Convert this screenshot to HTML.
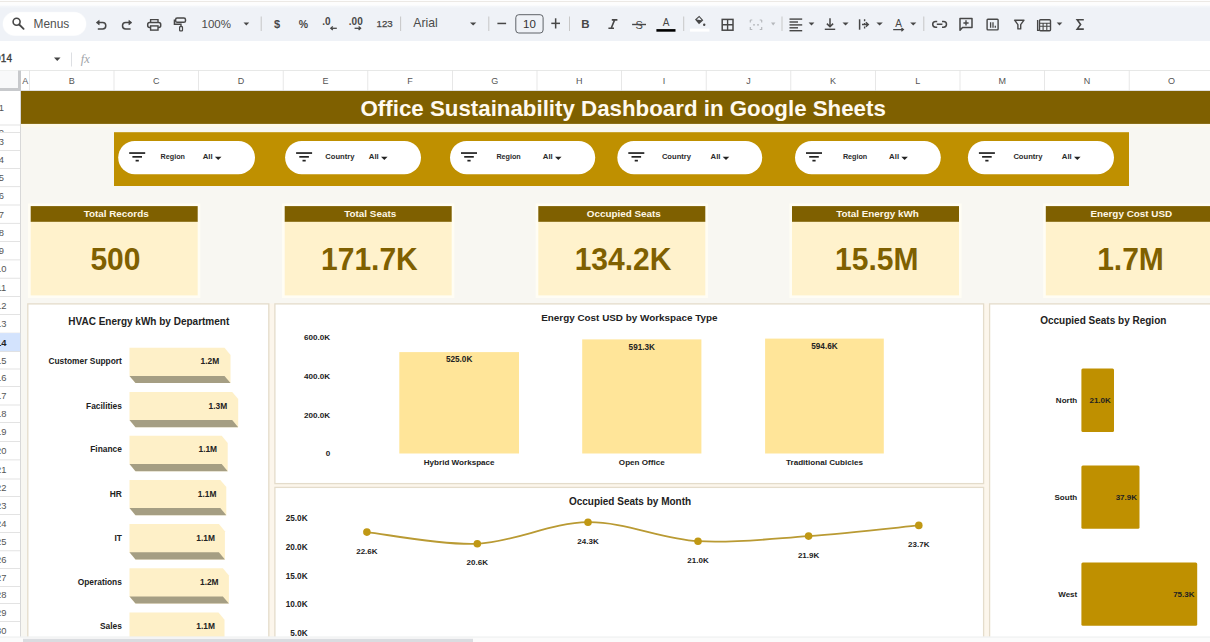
<!DOCTYPE html>
<html><head><meta charset="utf-8"><title>Office Sustainability Dashboard</title>
<style>html,body{margin:0;padding:0;width:1210px;height:642px;overflow:hidden;background:#fff}
svg{display:block;font-family:"Liberation Sans", sans-serif}</style></head>
<body><svg width="1210" height="642" viewBox="0 0 1210 642" font-family='"Liberation Sans", sans-serif'>
<rect x="0" y="0" width="1210" height="642" fill="#ffffff" />
<rect x="0" y="0" width="1210" height="8" fill="#fdfdfd" />
<rect x="0" y="1" width="1210" height="1" fill="#ece9e5" />
<defs><linearGradient id="tb" x1="0" y1="0" x2="0" y2="1"><stop offset="0" stop-color="#f6f8fb"/><stop offset="0.08" stop-color="#eff2f7"/><stop offset="1" stop-color="#eff2f7"/></linearGradient></defs>
<rect x="0" y="5.5" width="1210" height="35.5" fill="url(#tb)" />
<rect x="2.5" y="11.8" width="84" height="24.2" rx="12.1" fill="#f6f8fb"/><rect x="3" y="12.3" width="83" height="23.2" rx="11.6" fill="#ffffff"/>
<rect x="0" y="41" width="1210" height="29.5" fill="#ffffff" />
<rect x="0" y="70" width="1210" height="21" fill="#ffffff" />
<rect x="0" y="70" width="1210" height="0.8" fill="#e1e3e1" />
<rect x="0" y="70.5" width="21" height="20.5" fill="#f8f9fa" />
<rect x="18" y="70.5" width="3" height="20.5" fill="#c7c9cc" />
<rect x="0" y="88" width="21" height="3" fill="#c7c9cc" />
<rect x="21" y="91" width="1189" height="551" fill="#f8f7f2" />
<rect x="0" y="91" width="20.5" height="551" fill="#ffffff" />
<rect x="20" y="91" width="0.9" height="551" fill="#d4d4d4" />
<rect x="0" y="124.6" width="20.2" height="0.8" fill="#dcdcdc" />
<text x="1.3" y="111.4" font-size="9.4" font-weight="normal" fill="#555555" text-anchor="middle" >1</text>
<rect x="0" y="132.0" width="20.2" height="0.8" fill="#dcdcdc" />
<clipPath id="r2"><rect x="0" y="125.5" width="20" height="6.4"/></clipPath>
<g clip-path="url(#r2)">
<text x="1.3" y="136.0" font-size="9.4" font-weight="normal" fill="#555555" text-anchor="middle" >2</text>
</g>
<rect x="0" y="150.1" width="20.2" height="0.8" fill="#dcdcdc" />
<text x="1.3" y="144.8" font-size="9.4" font-weight="normal" fill="#555555" text-anchor="middle" >3</text>
<rect x="0" y="168.0" width="20.2" height="0.8" fill="#dcdcdc" />
<text x="1.3" y="162.8" font-size="9.4" font-weight="normal" fill="#555555" text-anchor="middle" >4</text>
<rect x="0" y="186.3" width="20.2" height="0.8" fill="#dcdcdc" />
<text x="1.3" y="181.0" font-size="9.4" font-weight="normal" fill="#555555" text-anchor="middle" >5</text>
<rect x="0" y="204.6" width="20.2" height="0.8" fill="#dcdcdc" />
<text x="1.3" y="199.2" font-size="9.4" font-weight="normal" fill="#555555" text-anchor="middle" >6</text>
<rect x="0" y="222.9" width="20.2" height="0.8" fill="#dcdcdc" />
<text x="1.3" y="217.6" font-size="9.4" font-weight="normal" fill="#555555" text-anchor="middle" >7</text>
<rect x="0" y="241.2" width="20.2" height="0.8" fill="#dcdcdc" />
<text x="1.3" y="235.8" font-size="9.4" font-weight="normal" fill="#555555" text-anchor="middle" >8</text>
<rect x="0" y="259.5" width="20.2" height="0.8" fill="#dcdcdc" />
<text x="1.3" y="254.2" font-size="9.4" font-weight="normal" fill="#555555" text-anchor="middle" >9</text>
<rect x="0" y="277.8" width="20.2" height="0.8" fill="#dcdcdc" />
<text x="1.3" y="272.4" font-size="9.4" font-weight="normal" fill="#555555" text-anchor="middle" >10</text>
<rect x="0" y="296.2" width="20.2" height="0.8" fill="#dcdcdc" />
<text x="1.3" y="290.8" font-size="9.4" font-weight="normal" fill="#555555" text-anchor="middle" >11</text>
<rect x="0" y="314.2" width="20.2" height="0.8" fill="#dcdcdc" />
<text x="1.3" y="309.0" font-size="9.4" font-weight="normal" fill="#555555" text-anchor="middle" >12</text>
<rect x="0" y="332.7" width="20.2" height="0.8" fill="#dcdcdc" />
<text x="1.3" y="327.2" font-size="9.4" font-weight="normal" fill="#555555" text-anchor="middle" >13</text>
<rect x="0" y="333.1" width="20.2" height="18.3" fill="#d3e3fd" />
<rect x="0" y="351.0" width="20.2" height="0.8" fill="#dcdcdc" />
<text x="1.3" y="345.6" font-size="9.4" font-weight="bold" fill="#1f1f1f" text-anchor="middle" >14</text>
<rect x="0" y="368.6" width="20.2" height="0.8" fill="#dcdcdc" />
<text x="1.3" y="363.6" font-size="9.4" font-weight="normal" fill="#555555" text-anchor="middle" >15</text>
<rect x="0" y="386.0" width="20.2" height="0.8" fill="#dcdcdc" />
<text x="1.3" y="381.1" font-size="9.4" font-weight="normal" fill="#555555" text-anchor="middle" >16</text>
<rect x="0" y="404.6" width="20.2" height="0.8" fill="#dcdcdc" />
<text x="1.3" y="399.1" font-size="9.4" font-weight="normal" fill="#555555" text-anchor="middle" >17</text>
<rect x="0" y="422.0" width="20.2" height="0.8" fill="#dcdcdc" />
<text x="1.3" y="417.1" font-size="9.4" font-weight="normal" fill="#555555" text-anchor="middle" >18</text>
<rect x="0" y="441.2" width="20.2" height="0.8" fill="#dcdcdc" />
<text x="1.3" y="435.4" font-size="9.4" font-weight="normal" fill="#555555" text-anchor="middle" >19</text>
<rect x="0" y="459.5" width="20.2" height="0.8" fill="#dcdcdc" />
<text x="1.3" y="454.1" font-size="9.4" font-weight="normal" fill="#555555" text-anchor="middle" >20</text>
<rect x="0" y="478.6" width="20.2" height="0.8" fill="#dcdcdc" />
<text x="1.3" y="472.8" font-size="9.4" font-weight="normal" fill="#555555" text-anchor="middle" >21</text>
<rect x="0" y="496.0" width="20.2" height="0.8" fill="#dcdcdc" />
<text x="1.3" y="491.1" font-size="9.4" font-weight="normal" fill="#555555" text-anchor="middle" >22</text>
<rect x="0" y="514.1" width="20.2" height="0.8" fill="#dcdcdc" />
<text x="1.3" y="508.8" font-size="9.4" font-weight="normal" fill="#555555" text-anchor="middle" >23</text>
<rect x="0" y="532.0" width="20.2" height="0.8" fill="#dcdcdc" />
<text x="1.3" y="526.9" font-size="9.4" font-weight="normal" fill="#555555" text-anchor="middle" >24</text>
<rect x="0" y="550.4" width="20.2" height="0.8" fill="#dcdcdc" />
<text x="1.3" y="545.0" font-size="9.4" font-weight="normal" fill="#555555" text-anchor="middle" >25</text>
<rect x="0" y="568.2" width="20.2" height="0.8" fill="#dcdcdc" />
<text x="1.3" y="563.1" font-size="9.4" font-weight="normal" fill="#555555" text-anchor="middle" >26</text>
<rect x="0" y="586.0" width="20.2" height="0.8" fill="#dcdcdc" />
<text x="1.3" y="580.9" font-size="9.4" font-weight="normal" fill="#555555" text-anchor="middle" >27</text>
<rect x="0" y="603.2" width="20.2" height="0.8" fill="#dcdcdc" />
<text x="1.3" y="598.4" font-size="9.4" font-weight="normal" fill="#555555" text-anchor="middle" >28</text>
<rect x="0" y="621.0" width="20.2" height="0.8" fill="#dcdcdc" />
<text x="1.3" y="615.9" font-size="9.4" font-weight="normal" fill="#555555" text-anchor="middle" >29</text>
<rect x="0" y="638.4" width="20.2" height="0.8" fill="#dcdcdc" />
<text x="1.3" y="633.5" font-size="9.4" font-weight="normal" fill="#555555" text-anchor="middle" >30</text>
<rect x="0" y="655.6" width="20.2" height="0.8" fill="#dcdcdc" />
<text x="1.3" y="650.8" font-size="9.4" font-weight="normal" fill="#555555" text-anchor="middle" >31</text>
<rect x="29.0" y="70.5" width="0.8" height="20.5" fill="#e1e1e1" />
<text x="25.2" y="83.8" font-size="9" font-weight="normal" fill="#555555" text-anchor="middle" >A</text>
<rect x="113.6" y="70.5" width="0.8" height="20.5" fill="#e1e1e1" />
<text x="71.7" y="83.8" font-size="9" font-weight="normal" fill="#555555" text-anchor="middle" >B</text>
<rect x="198.2" y="70.5" width="0.8" height="20.5" fill="#e1e1e1" />
<text x="156.3" y="83.8" font-size="9" font-weight="normal" fill="#555555" text-anchor="middle" >C</text>
<rect x="282.8" y="70.5" width="0.8" height="20.5" fill="#e1e1e1" />
<text x="240.9" y="83.8" font-size="9" font-weight="normal" fill="#555555" text-anchor="middle" >D</text>
<rect x="367.4" y="70.5" width="0.8" height="20.5" fill="#e1e1e1" />
<text x="325.5" y="83.8" font-size="9" font-weight="normal" fill="#555555" text-anchor="middle" >E</text>
<rect x="452.0" y="70.5" width="0.8" height="20.5" fill="#e1e1e1" />
<text x="410.1" y="83.8" font-size="9" font-weight="normal" fill="#555555" text-anchor="middle" >F</text>
<rect x="536.6" y="70.5" width="0.8" height="20.5" fill="#e1e1e1" />
<text x="494.7" y="83.8" font-size="9" font-weight="normal" fill="#555555" text-anchor="middle" >G</text>
<rect x="621.2" y="70.5" width="0.8" height="20.5" fill="#e1e1e1" />
<text x="579.3" y="83.8" font-size="9" font-weight="normal" fill="#555555" text-anchor="middle" >H</text>
<rect x="705.8" y="70.5" width="0.8" height="20.5" fill="#e1e1e1" />
<text x="663.9" y="83.8" font-size="9" font-weight="normal" fill="#555555" text-anchor="middle" >I</text>
<rect x="790.4" y="70.5" width="0.8" height="20.5" fill="#e1e1e1" />
<text x="748.5" y="83.8" font-size="9" font-weight="normal" fill="#555555" text-anchor="middle" >J</text>
<rect x="875" y="70.5" width="0.8" height="20.5" fill="#e1e1e1" />
<text x="833.1" y="83.8" font-size="9" font-weight="normal" fill="#555555" text-anchor="middle" >K</text>
<rect x="959.6" y="70.5" width="0.8" height="20.5" fill="#e1e1e1" />
<text x="917.7" y="83.8" font-size="9" font-weight="normal" fill="#555555" text-anchor="middle" >L</text>
<rect x="1044.2" y="70.5" width="0.8" height="20.5" fill="#e1e1e1" />
<text x="1002.3" y="83.8" font-size="9" font-weight="normal" fill="#555555" text-anchor="middle" >M</text>
<rect x="1128.8" y="70.5" width="0.8" height="20.5" fill="#e1e1e1" />
<text x="1086.9" y="83.8" font-size="9" font-weight="normal" fill="#555555" text-anchor="middle" >N</text>
<rect x="1213.4" y="70.5" width="0.8" height="20.5" fill="#e1e1e1" />
<text x="1171.5" y="83.8" font-size="9" font-weight="normal" fill="#555555" text-anchor="middle" >O</text>
<rect x="21" y="90.2" width="1189" height="0.8" fill="#d9d9d9" />
<text x="-6.4" y="61.8" font-size="10" font-weight="normal" fill="#3c3c3c" text-anchor="start" stroke="#3c3c3c" stroke-width="0.35">D14</text>
<path d="M54 57.5 L60.5 57.5 L57.25 61 Z" fill="#444"/>
<rect x="71" y="52.5" width="0.9" height="14" fill="#dadce0" />
<text x="80.8" y="63.0" font-size="12.5" font-weight="normal" fill="#a0a4a8" text-anchor="start" font-style="italic" font-family="Liberation Serif, serif">fx</text>
<circle cx="16.6" cy="21.8" r="3.5" stroke="#474747" fill="none" stroke-width="1.6"/><path d="M19.2 24.5 L23.6 28.9" stroke="#474747" fill="none" stroke-width="1.8" stroke-linecap="round"/>
<text x="33.5" y="27.7" font-size="11.9" font-weight="normal" fill="#505050" text-anchor="start" >Menus</text>
<path d="M97.8 29 H102.6 A3.2 3.2 0 0 0 102.6 22.6 H98" stroke="#474747" fill="none" stroke-width="1.5"/><path d="M96.2 22.6 L99.2 20.3 V24.9 Z" fill="#474747" stroke="#474747" stroke-width="0.6" stroke-linejoin="round"/>
<path d="M130.6 29 H125.7 A3.2 3.2 0 0 1 125.7 22.6 H130.2" stroke="#474747" fill="none" stroke-width="1.5"/><path d="M131.9 22.6 L128.9 20.3 V24.9 Z" fill="#474747" stroke="#474747" stroke-width="0.6" stroke-linejoin="round"/>
<path d="M150.6 22.4 V19.6 H158 V22.4" stroke="#474747" fill="none" stroke-width="1.4"/><rect x="147.7" y="22.4" width="13" height="5.2" rx="2" stroke="#474747" fill="none" stroke-width="1.5"/><rect x="150.6" y="25.9" width="7.4" height="4.2" fill="#eff2f7" stroke="#474747" fill="none" stroke-width="1.4"/>
<rect x="175.6" y="18.1" width="9.9" height="4.2" rx="1.6" stroke="#474747" fill="none" stroke-width="1.5"/><path d="M175.6 20.2 H174.4 V24.3 H181 V26.6" stroke="#474747" fill="none" stroke-width="1.4"/><rect x="179.6" y="26.6" width="2.9" height="4.2" rx="0.6" stroke="#474747" fill="none" stroke-width="1.2"/>
<text x="201.5" y="28.2" font-size="11.5" font-weight="normal" fill="#4a4a4a" text-anchor="start" >100%</text>
<path d="M243.5 22.6 L249.2 22.6 L246.35 25.4 Z" fill="#474747"/>
<rect x="260.7" y="16.5" width="1" height="14.5" fill="#c7c7c7" />
<text x="277.1" y="27.9" font-size="11" font-weight="bold" fill="#474747" text-anchor="middle" >$</text>
<text x="303.5" y="27.6" font-size="10.5" font-weight="bold" fill="#474747" text-anchor="middle" >%</text>
<text x="322.3" y="25.4" font-size="10" font-weight="bold" fill="#474747" text-anchor="start" >.0</text>
<path d="M336.8 28.3 H331" stroke="#474747" fill="none" stroke-width="1.3"/><path d="M332.8 26.5 L330.8 28.3 L332.8 30.1" stroke="#474747" fill="none" stroke-width="1.3"/>
<text x="348.8" y="25.4" font-size="10" font-weight="bold" fill="#474747" text-anchor="start" >.00</text>
<path d="M354.6 28.3 H360.4" stroke="#474747" fill="none" stroke-width="1.3"/><path d="M358.6 26.5 L360.6 28.3 L358.6 30.1" stroke="#474747" fill="none" stroke-width="1.3"/>
<text x="376.6" y="26.9" font-size="9.7" font-weight="normal" fill="#444444" text-anchor="start" stroke="#444" stroke-width="0.25">123</text>
<rect x="400.1" y="16.5" width="1" height="14.5" fill="#c7c7c7" />
<text x="413.3" y="27.0" font-size="12.2" font-weight="normal" fill="#4a4a4a" text-anchor="start" >Arial</text>
<path d="M470 22.6 L476.3 22.6 L473.15 25.4 Z" fill="#474747"/>
<rect x="488.3" y="16.5" width="1" height="14.5" fill="#c7c7c7" />
<rect x="497.4" y="22.7" width="8.7" height="1.5" fill="#474747" />
<rect x="515.8" y="14.7" width="27.3" height="18.3" rx="3" fill="none" stroke="#5f6368" stroke-width="1"/>
<text x="529.4" y="28" font-size="11.5" font-weight="normal" fill="#333" text-anchor="middle" >10</text>
<rect x="551.3" y="22.6" width="8.7" height="1.5" fill="#474747" />
<rect x="554.9" y="18.3" width="1.5" height="10.2" fill="#474747" />
<rect x="569.0" y="16.5" width="1" height="14.5" fill="#c7c7c7" />
<text x="585.4" y="28.1" font-size="11.5" font-weight="bold" fill="#474747" text-anchor="middle" >B</text>
<path d="M611.8 19.9 H617.4 M608.4 28.2 H614 M614.6 19.9 L611.2 28.2" stroke="#474747" fill="none" stroke-width="1.6"/>
<text x="639.1" y="29.3" font-size="11" font-weight="normal" fill="#474747" text-anchor="middle" >S</text>
<rect x="632.1" y="23.8" width="13.9" height="1.4" fill="#474747" />
<text x="666" y="26.2" font-size="10" font-weight="normal" fill="#474747" text-anchor="middle" >A</text>
<rect x="656.4" y="29.1" width="19.1" height="2.6" fill="#000000" />
<rect x="683.2" y="16.5" width="1" height="14.5" fill="#c7c7c7" />
<path d="M695 19.5 L699.2 15.8 L703.3 20.3 L699 24.3 Z" fill="#474747"/><path d="M696.6 19.5 L699.2 17.3 L701.7 20.2 Z" fill="#eef2f8"/><circle cx="704.2" cy="24.8" r="1.2" fill="#474747"/>
<rect x="690" y="28.6" width="19.4" height="3" fill="#ffffff" />
<rect x="722.2" y="19.4" width="10.8" height="10.8" stroke="#474747" fill="none" stroke-width="1.5"/><path d="M727.6 19.4 V30.2 M722.2 24.8 H733" stroke="#474747" fill="none" stroke-width="1.4"/>
<path d="M750.3 20 H752.3 M750.3 20 V22.5 M750.3 27 V29.5 H752.3 M761.7 20 H759.7 M761.7 20 V22.5 M761.7 27 V29.5 H759.7" stroke="#b5b8bc" fill="none" stroke-width="1.2"/><path d="M753 24.8 H755 M757 24.8 H759" stroke="#b5b8bc" stroke-width="1.2"/>
<path d="M771 22.6 L775.4 22.6 L773.2 25.4 Z" fill="#b5b8bc"/>
<rect x="781.5" y="16.5" width="1" height="14.5" fill="#c7c7c7" />
<rect x="789.5" y="18.4" width="12.7" height="1.4" fill="#474747" />
<rect x="789.5" y="21.3" width="8.5" height="1.4" fill="#474747" />
<rect x="789.5" y="24.2" width="12.7" height="1.4" fill="#474747" />
<rect x="789.5" y="27.1" width="8.5" height="1.4" fill="#474747" />
<rect x="789.5" y="30.0" width="12.7" height="1.4" fill="#474747" />
<path d="M808.6 22.6 L814.4 22.6 L811.5 25.4 Z" fill="#474747"/>
<path d="M830 18.3 V26.5 M826.9 23.6 L830 26.7 L833.1 23.6" stroke="#474747" fill="none" stroke-width="1.5"/>
<rect x="824.8" y="28.6" width="10.4" height="1.4" fill="#474747" />
<path d="M842.5 22.6 L848.6 22.6 L845.55 25.4 Z" fill="#474747"/>
<path d="M859.6 19.3 V29.7" stroke="#474747" fill="none" stroke-width="1.5"/><path d="M864.6 19.3 V29.7" stroke="#474747" fill="none" stroke-width="1.4" stroke-dasharray="2 1.6"/><path d="M862 24.5 H868 M865.9 22.3 L868.3 24.5 L865.9 26.7" stroke="#474747" fill="none" stroke-width="1.4"/>
<path d="M876.4 22.6 L882.8 22.6 L879.6 25.4 Z" fill="#474747"/>
<text x="898.6" y="27.2" font-size="10" font-weight="normal" fill="#474747" text-anchor="middle" >A</text>
<path d="M893.2 29.6 H903 M901.4 28 L903.4 29.6 L901.4 31.2" stroke="#474747" fill="none" stroke-width="1.2"/>
<path d="M910.2 22.6 L916.3 22.6 L913.25 25.4 Z" fill="#474747"/>
<rect x="923.3" y="16.5" width="1" height="14.5" fill="#c7c7c7" />
<path d="M937.2 21.4 H935.6 A2.9 2.9 0 0 0 935.6 27.2 H937.2 M942 21.4 H943.6 A2.9 2.9 0 0 1 943.6 27.2 H942 M936.8 24.3 H942.4" stroke="#474747" fill="none" stroke-width="1.5"/>
<path d="M960 30.2 V18.5 H972 V27.5 H962.5 Z" stroke="#474747" fill="none" stroke-width="1.5" stroke-linejoin="round"/><path d="M966 20.3 V25.6 M963.4 23 H968.6" stroke="#474747" fill="none" stroke-width="1.4"/>
<rect x="987.1" y="19.3" width="11" height="10.6" rx="0.8" stroke="#474747" fill="none" stroke-width="1.4"/><path d="M990.6 22.2 V27.8 M993 22.2 V27.8 M995.3 25.8 V27.8" stroke="#474747" fill="none" stroke-width="1.3"/>
<path d="M1014.6 20.2 H1024 L1020.7 24.6 V28.9 H1017.9 V24.6 Z" stroke="#474747" fill="none" stroke-width="1.4" stroke-linejoin="round"/>
<path d="M1037.6 20 V30.4 H1039" stroke="#474747" fill="none" stroke-width="1.3"/><rect x="1039.5" y="19.8" width="11" height="11" rx="1" stroke="#474747" fill="none" stroke-width="1.4"/><path d="M1039.5 23.3 H1050.5 M1039.5 26.2 H1050.5 M1043.1 23.3 V30.8 M1046.8 23.3 V30.8" stroke="#474747" fill="none" stroke-width="1.1"/>
<path d="M1056.7 22.6 L1062.3 22.6 L1059.5 25.4 Z" fill="#474747"/>
<path d="M1083.8 19.8 H1077.2 L1080.6 24.5 L1077.2 29.1 H1083.8" stroke="#474747" fill="none" stroke-width="1.6"/>
<rect x="21" y="124" width="1189" height="3.2" fill="#fdf9ea" />
<rect x="21" y="91" width="1189" height="32.9" fill="#7f6000" />
<text x="623.2" y="115.6" font-size="22.3" font-weight="bold" fill="#fffaf0" text-anchor="middle" >Office Sustainability Dashboard in Google Sheets</text>
<rect x="114" y="132.2" width="1015" height="53.8" fill="#bf9000" />
<rect x="118.2" y="141" width="136.8" height="33.2" rx="16.6" fill="#ffffff"/>
<rect x="129.2" y="152.2" width="16" height="1.7" fill="#222" />
<rect x="132.4" y="156" width="9.6" height="1.7" fill="#222" />
<rect x="135.6" y="159.8" width="3.2" height="1.7" fill="#222" />
<text x="160.6" y="158.5" font-size="7.2" font-weight="bold" fill="#2b2b2b" text-anchor="start" >Region</text>
<text x="202.7" y="158.6" font-size="7.8" font-weight="bold" fill="#2b2b2b" text-anchor="start" >All</text>
<path d="M214.9 156.7 L221.5 156.7 L218.2 160.1 Z" fill="#222"/>
<rect x="285.1" y="141" width="135.9" height="33.2" rx="16.6" fill="#ffffff"/>
<rect x="296.1" y="152.2" width="16" height="1.7" fill="#222" />
<rect x="299.3" y="156" width="9.6" height="1.7" fill="#222" />
<rect x="302.5" y="159.8" width="3.2" height="1.7" fill="#222" />
<text x="325.3" y="158.5" font-size="7.6" font-weight="bold" fill="#2b2b2b" text-anchor="start" >Country</text>
<text x="368.8" y="158.6" font-size="7.8" font-weight="bold" fill="#2b2b2b" text-anchor="start" >All</text>
<path d="M381 156.7 L387.6 156.7 L384.3 160.1 Z" fill="#222"/>
<rect x="450" y="141" width="145.2" height="33.2" rx="16.6" fill="#ffffff"/>
<rect x="461" y="152.2" width="16" height="1.7" fill="#222" />
<rect x="464.2" y="156" width="9.6" height="1.7" fill="#222" />
<rect x="467.4" y="159.8" width="3.2" height="1.7" fill="#222" />
<text x="496.4" y="158.5" font-size="7.2" font-weight="bold" fill="#2b2b2b" text-anchor="start" >Region</text>
<text x="542.8" y="158.6" font-size="7.8" font-weight="bold" fill="#2b2b2b" text-anchor="start" >All</text>
<path d="M555 156.7 L561.6 156.7 L558.3 160.1 Z" fill="#222"/>
<rect x="617.3" y="141" width="144.9" height="33.2" rx="16.6" fill="#ffffff"/>
<rect x="628.3" y="152.2" width="16" height="1.7" fill="#222" />
<rect x="631.5" y="156" width="9.6" height="1.7" fill="#222" />
<rect x="634.7" y="159.8" width="3.2" height="1.7" fill="#222" />
<text x="661.9" y="158.5" font-size="7.6" font-weight="bold" fill="#2b2b2b" text-anchor="start" >Country</text>
<text x="710.5" y="158.6" font-size="7.8" font-weight="bold" fill="#2b2b2b" text-anchor="start" >All</text>
<path d="M722.7 156.7 L729.3 156.7 L726.0 160.1 Z" fill="#222"/>
<rect x="795" y="141" width="145.8" height="33.2" rx="16.6" fill="#ffffff"/>
<rect x="806" y="152.2" width="16" height="1.7" fill="#222" />
<rect x="809.2" y="156" width="9.6" height="1.7" fill="#222" />
<rect x="812.4" y="159.8" width="3.2" height="1.7" fill="#222" />
<text x="842.9" y="158.5" font-size="7.2" font-weight="bold" fill="#2b2b2b" text-anchor="start" >Region</text>
<text x="889.1" y="158.6" font-size="7.8" font-weight="bold" fill="#2b2b2b" text-anchor="start" >All</text>
<path d="M901.3 156.7 L907.9 156.7 L904.6 160.1 Z" fill="#222"/>
<rect x="967.9" y="141" width="146.1" height="33.2" rx="16.6" fill="#ffffff"/>
<rect x="978.9" y="152.2" width="16" height="1.7" fill="#222" />
<rect x="982.1" y="156" width="9.6" height="1.7" fill="#222" />
<rect x="985.3" y="159.8" width="3.2" height="1.7" fill="#222" />
<text x="1013.4" y="158.5" font-size="7.6" font-weight="bold" fill="#2b2b2b" text-anchor="start" >Country</text>
<text x="1061.8" y="158.6" font-size="7.8" font-weight="bold" fill="#2b2b2b" text-anchor="start" >All</text>
<path d="M1074 156.7 L1080.6 156.7 L1077.3 160.1 Z" fill="#222"/>
<rect x="28.1" y="203.5" width="172.2" height="94.6" fill="#fffdf4" />
<rect x="30.7" y="206.1" width="167" height="15.8" fill="#7f6000" />
<rect x="30.7" y="221.9" width="167" height="73.5" fill="#fff2cc" />
<text x="116.2" y="216.9" font-size="9.9" font-weight="bold" fill="#fff8e6" text-anchor="middle" >Total Records</text>
<g transform="translate(115.4 270.3) scale(1 1.06)"><text x="0" y="0" font-size="30" font-weight="bold" fill="#7f6000" text-anchor="middle">500</text></g>
<rect x="282.1" y="203.5" width="172.2" height="94.6" fill="#fffdf4" />
<rect x="284.7" y="206.1" width="167" height="15.8" fill="#7f6000" />
<rect x="284.7" y="221.9" width="167" height="73.5" fill="#fff2cc" />
<text x="370.2" y="216.9" font-size="9.9" font-weight="bold" fill="#fff8e6" text-anchor="middle" >Total Seats</text>
<g transform="translate(369.4 270.3) scale(1 1.06)"><text x="0" y="0" font-size="30" font-weight="bold" fill="#7f6000" text-anchor="middle">171.7K</text></g>
<rect x="535.7" y="203.5" width="172.2" height="94.6" fill="#fffdf4" />
<rect x="538.3" y="206.1" width="167" height="15.8" fill="#7f6000" />
<rect x="538.3" y="221.9" width="167" height="73.5" fill="#fff2cc" />
<text x="623.8" y="216.9" font-size="9.9" font-weight="bold" fill="#fff8e6" text-anchor="middle" >Occupied Seats</text>
<g transform="translate(623.0 270.3) scale(1 1.06)"><text x="0" y="0" font-size="30" font-weight="bold" fill="#7f6000" text-anchor="middle">134.2K</text></g>
<rect x="789.4" y="203.5" width="172.2" height="94.6" fill="#fffdf4" />
<rect x="792" y="206.1" width="167" height="15.8" fill="#7f6000" />
<rect x="792" y="221.9" width="167" height="73.5" fill="#fff2cc" />
<text x="877.5" y="216.9" font-size="9.9" font-weight="bold" fill="#fff8e6" text-anchor="middle" >Total Energy kWh</text>
<g transform="translate(876.7 270.3) scale(1 1.06)"><text x="0" y="0" font-size="30" font-weight="bold" fill="#7f6000" text-anchor="middle">15.5M</text></g>
<rect x="1043.2" y="203.5" width="172.2" height="94.6" fill="#fffdf4" />
<rect x="1045.8" y="206.1" width="167" height="15.8" fill="#7f6000" />
<rect x="1045.8" y="221.9" width="167" height="73.5" fill="#fff2cc" />
<text x="1131.3" y="216.9" font-size="9.9" font-weight="bold" fill="#fff8e6" text-anchor="middle" >Energy Cost USD</text>
<g transform="translate(1130.5 270.3) scale(1 1.06)"><text x="0" y="0" font-size="30" font-weight="bold" fill="#7f6000" text-anchor="middle">1.7M</text></g>
<rect x="268" y="303.5" width="8" height="340" fill="#fcf6ec" />
<rect x="983" y="303.5" width="8" height="340" fill="#fcf6ec" />
<rect x="274" y="483" width="711" height="5" fill="#fcf6ec" />
<rect x="27.8" y="303.9" width="241.0" height="396.1" fill="#ffffff" stroke="#e4dccb" stroke-width="1.3"/>
<rect x="274.9" y="303.9" width="708.7" height="179.7" fill="#ffffff" stroke="#e4dccb" stroke-width="1.3"/>
<rect x="274.9" y="487.4" width="708.7" height="212.6" fill="#ffffff" stroke="#e4dccb" stroke-width="1.3"/>
<rect x="989.6" y="303.9" width="270.4" height="396.1" fill="#ffffff" stroke="#e4dccb" stroke-width="1.3"/>
<text x="148.8" y="325" font-size="10" font-weight="bold" fill="#222222" text-anchor="middle" >HVAC Energy kWh by Department</text>
<path d="M129.5 347.7 H224.5 L230.5 354.9 V383.1 H135.5 L129.5 375.9 Z" fill="#fef0c8"/>
<path d="M129.5 375.9 H224.5 L230.5 383.1 H135.5 Z" fill="#a59e83"/>
<text x="219.2" y="364.3" font-size="8.4" font-weight="bold" fill="#222222" text-anchor="end" >1.2M</text>
<text x="121.9" y="364.3" font-size="8.4" font-weight="bold" fill="#222222" text-anchor="end" >Customer Support</text>
<path d="M129.5 391.9 H232.2 L238.2 399.1 V427.3 H135.5 L129.5 420.1 Z" fill="#fef0c8"/>
<path d="M129.5 420.1 H232.2 L238.2 427.3 H135.5 Z" fill="#a59e83"/>
<text x="227.2" y="408.5" font-size="8.4" font-weight="bold" fill="#222222" text-anchor="end" >1.3M</text>
<text x="121.9" y="408.5" font-size="8.4" font-weight="bold" fill="#222222" text-anchor="end" >Facilities</text>
<path d="M129.5 435.8 H221.7 L227.7 443.0 V471.2 H135.5 L129.5 464.0 Z" fill="#fef0c8"/>
<path d="M129.5 464.0 H221.7 L227.7 471.2 H135.5 Z" fill="#a59e83"/>
<text x="217.1" y="452.4" font-size="8.4" font-weight="bold" fill="#222222" text-anchor="end" >1.1M</text>
<text x="121.9" y="452.4" font-size="8.4" font-weight="bold" fill="#222222" text-anchor="end" >Finance</text>
<path d="M129.5 479.9 H220.3 L226.3 487.1 V515.3 H135.5 L129.5 508.1 Z" fill="#fef0c8"/>
<path d="M129.5 508.1 H220.3 L226.3 515.3 H135.5 Z" fill="#a59e83"/>
<text x="216.4" y="496.5" font-size="8.4" font-weight="bold" fill="#222222" text-anchor="end" >1.1M</text>
<text x="121.9" y="496.5" font-size="8.4" font-weight="bold" fill="#222222" text-anchor="end" >HR</text>
<path d="M129.5 524.0 H218.9 L224.9 531.2 V559.4 H135.5 L129.5 552.2 Z" fill="#fef0c8"/>
<path d="M129.5 552.2 H218.9 L224.9 559.4 H135.5 Z" fill="#a59e83"/>
<text x="214.9" y="540.6" font-size="8.4" font-weight="bold" fill="#222222" text-anchor="end" >1.1M</text>
<text x="121.9" y="540.6" font-size="8.4" font-weight="bold" fill="#222222" text-anchor="end" >IT</text>
<path d="M129.5 568.2 H222.9 L228.9 575.4 V603.6 H135.5 L129.5 596.4 Z" fill="#fef0c8"/>
<path d="M129.5 596.4 H222.9 L228.9 603.6 H135.5 Z" fill="#a59e83"/>
<text x="218.6" y="584.8" font-size="8.4" font-weight="bold" fill="#222222" text-anchor="end" >1.2M</text>
<text x="121.9" y="584.8" font-size="8.4" font-weight="bold" fill="#222222" text-anchor="end" >Operations</text>
<path d="M129.5 612.6 H218.5 L224.5 619.8 V648 H135.5 L129.5 640.8 Z" fill="#fef0c8"/>
<path d="M129.5 640.8 H218.5 L224.5 648 H135.5 Z" fill="#a59e83"/>
<text x="214.9" y="629.2" font-size="8.4" font-weight="bold" fill="#222222" text-anchor="end" >1.1M</text>
<text x="121.9" y="629.2" font-size="8.4" font-weight="bold" fill="#222222" text-anchor="end" >Sales</text>
<text x="629.4" y="321.4" font-size="9.9" font-weight="bold" fill="#222222" text-anchor="middle" >Energy Cost USD by Workspace Type</text>
<text x="330.2" y="339.9" font-size="8.1" font-weight="bold" fill="#222222" text-anchor="end" >600.0K</text>
<text x="330.2" y="379.1" font-size="8.1" font-weight="bold" fill="#222222" text-anchor="end" >400.0K</text>
<text x="330.2" y="417.5" font-size="8.1" font-weight="bold" fill="#222222" text-anchor="end" >200.0K</text>
<text x="330.2" y="456.2" font-size="8.1" font-weight="bold" fill="#222222" text-anchor="end" >0</text>
<rect x="399.3" y="352.1" width="119.7" height="101.4" fill="#ffe599" />
<text x="459.15" y="362.4" font-size="8.2" font-weight="bold" fill="#222222" text-anchor="middle" >525.0K</text>
<text x="459.15" y="464.7" font-size="8.1" font-weight="bold" fill="#222222" text-anchor="middle" >Hybrid Workspace</text>
<rect x="582.2" y="339.4" width="119.2" height="114.1" fill="#ffe599" />
<text x="641.8" y="349.7" font-size="8.2" font-weight="bold" fill="#222222" text-anchor="middle" >591.3K</text>
<text x="641.8" y="464.7" font-size="8.1" font-weight="bold" fill="#222222" text-anchor="middle" >Open Office</text>
<rect x="765.1" y="338.6" width="118.7" height="114.9" fill="#ffe599" />
<text x="824.45" y="348.9" font-size="8.2" font-weight="bold" fill="#222222" text-anchor="middle" >594.6K</text>
<text x="824.45" y="464.7" font-size="8.1" font-weight="bold" fill="#222222" text-anchor="middle" >Traditional Cubicles</text>
<text x="630" y="505" font-size="10" font-weight="bold" fill="#222222" text-anchor="middle" >Occupied Seats by Month</text>
<text x="307.6" y="521.3" font-size="8.2" font-weight="bold" fill="#222222" text-anchor="end" >25.0K</text>
<text x="307.6" y="550.0" font-size="8.2" font-weight="bold" fill="#222222" text-anchor="end" >20.0K</text>
<text x="307.6" y="578.7" font-size="8.2" font-weight="bold" fill="#222222" text-anchor="end" >15.0K</text>
<text x="307.6" y="607.4" font-size="8.2" font-weight="bold" fill="#222222" text-anchor="end" >10.0K</text>
<text x="307.6" y="636.1" font-size="8.2" font-weight="bold" fill="#222222" text-anchor="end" >5.0K</text>
<path d="M366.9 532.1 C385.3 534.0 440.4 545.4 477.3 543.8 C514.1 542.1 551.2 522.6 588 522.2 C624.8 521.8 661.2 538.9 698 541.2 C734.8 543.5 771.8 538.7 808.6 536.1 C845.4 533.5 900.4 527.2 918.8 525.4" fill="none" stroke="#b99a33" stroke-width="1.8"/>
<circle cx="366.9" cy="532.1" r="3.8" fill="#c09814"/>
<text x="366.9" y="553.6" font-size="8" font-weight="bold" fill="#222222" text-anchor="middle" >22.6K</text>
<circle cx="477.3" cy="543.8" r="3.8" fill="#c09814"/>
<text x="477.3" y="565.3" font-size="8" font-weight="bold" fill="#222222" text-anchor="middle" >20.6K</text>
<circle cx="588" cy="522.2" r="3.8" fill="#c09814"/>
<text x="588" y="543.7" font-size="8" font-weight="bold" fill="#222222" text-anchor="middle" >24.3K</text>
<circle cx="698" cy="541.2" r="3.8" fill="#c09814"/>
<text x="698" y="562.7" font-size="8" font-weight="bold" fill="#222222" text-anchor="middle" >21.0K</text>
<circle cx="808.6" cy="536.1" r="3.8" fill="#c09814"/>
<text x="808.6" y="557.6" font-size="8" font-weight="bold" fill="#222222" text-anchor="middle" >21.9K</text>
<circle cx="918.8" cy="525.4" r="3.8" fill="#c09814"/>
<text x="918.8" y="546.9" font-size="8" font-weight="bold" fill="#222222" text-anchor="middle" >23.7K</text>
<text x="1103.3" y="323.5" font-size="10" font-weight="bold" fill="#222222" text-anchor="middle" >Occupied Seats by Region</text>
<rect x="1081.4" y="368.6" width="32.6" height="63.3" rx="1.5" fill="#bf9000"/>
<text x="1110.8" y="403.1" font-size="8" font-weight="bold" fill="#222222" text-anchor="end" >21.0K</text>
<text x="1077.2" y="403.1" font-size="8" font-weight="bold" fill="#222222" text-anchor="end" >North</text>
<rect x="1081.4" y="465.4" width="58.1" height="63.3" rx="1.5" fill="#bf9000"/>
<text x="1137" y="499.9" font-size="8" font-weight="bold" fill="#222222" text-anchor="end" >37.9K</text>
<text x="1077.2" y="499.9" font-size="8" font-weight="bold" fill="#222222" text-anchor="end" >South</text>
<rect x="1081.4" y="562.5" width="115.8" height="63.3" rx="1.5" fill="#bf9000"/>
<text x="1194.5" y="597.0" font-size="8" font-weight="bold" fill="#222222" text-anchor="end" >75.3K</text>
<text x="1077.2" y="597.0" font-size="8" font-weight="bold" fill="#222222" text-anchor="end" >West</text>
<rect x="0" y="636.6" width="1210" height="5.4" fill="#fbfbfb" />
<rect x="0" y="636.6" width="1210" height="0.9" fill="#eceded" />
<rect x="23" y="638.8" width="450" height="3.2" fill="#dadce0" />
</svg></body></html>
